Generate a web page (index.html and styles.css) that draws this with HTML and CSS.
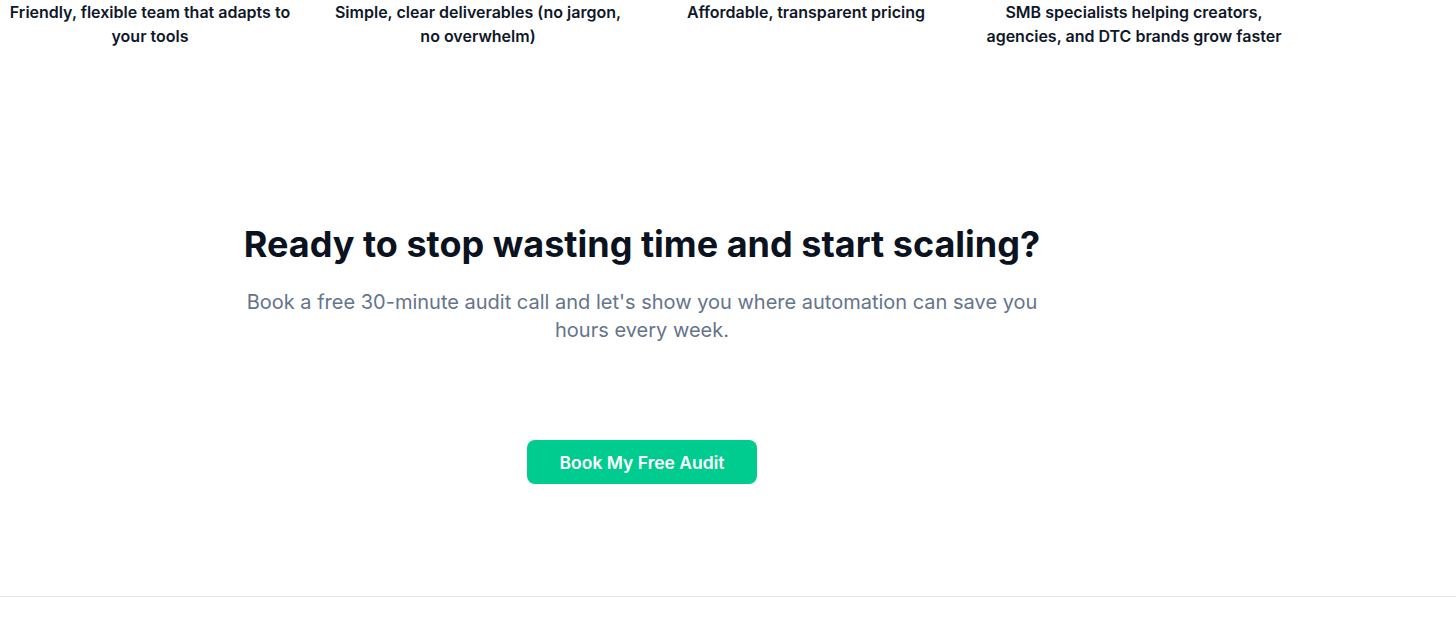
FILE: index.html
```html
<!DOCTYPE html>
<html lang="en">
<head>
<meta charset="utf-8">
<title>Ready to scale</title>
<link rel="stylesheet" href="styles.css">
</head>
<body>
<div class="page">
  <section class="features">
    <div class="feature">Friendly, flexible team that adapts to your tools</div>
    <div class="feature">Simple, clear deliverables (no jargon, no overwhelm)</div>
    <div class="feature">Affordable, transparent pricing</div>
    <div class="feature">SMB specialists helping creators, agencies, and DTC brands grow faster</div>
  </section>
  <section class="cta">
    <h2 class="cta-title">Ready to stop wasting time and start scaling?</h2>
    <p class="cta-text">Book a free 30-minute audit call and let's show you where automation can save you hours every week.</p>
    <a class="cta-button" href="#">Book My Free Audit</a>
  </section>
</div>
<footer class="footer"></footer>
</body>
</html>
```

FILE: styles.css
```css
html, body {
  margin: 0;
  padding: 0;
  background: #ffffff;
}
body {
  font-family: Inter, "Noto Sans", sans-serif;
  color: #0f172a;
}
.page {
  width: 1284px;
}
.features {
  display: grid;
  grid-template-columns: repeat(4, 300px);
  column-gap: 28px;
}
.feature {
  text-align: center;
  font-size: 16px;
  font-weight: 600;
  line-height: 24px;
  color: #0f172a;
}
.cta {
  display: flex;
  flex-direction: column;
  align-items: center;
  padding-top: 176px;
  padding-bottom: 112px;
}
.cta-title {
  margin: 0;
  font-size: 36px;
  line-height: 40px;
  font-weight: 700;
  color: #0b1220;
}
.cta-text {
  margin: 24px 0 0;
  max-width: 800px;
  text-align: center;
  font-size: 20px;
  line-height: 28px;
  color: #64748b;
}
.cta-button {
  margin-top: 96px;
  display: flex;
  align-items: center;
  justify-content: center;
  width: 230px;
  height: 44px;
  box-sizing: border-box;
  border-radius: 8px;
  background: #00cc8f;
  color: #ffffff;
  font-size: 17.5px;
  font-weight: 600;
  text-decoration: none;
}
.footer {
  border-top: 1px solid #e2e8f0;
  height: 40px;
}
```
